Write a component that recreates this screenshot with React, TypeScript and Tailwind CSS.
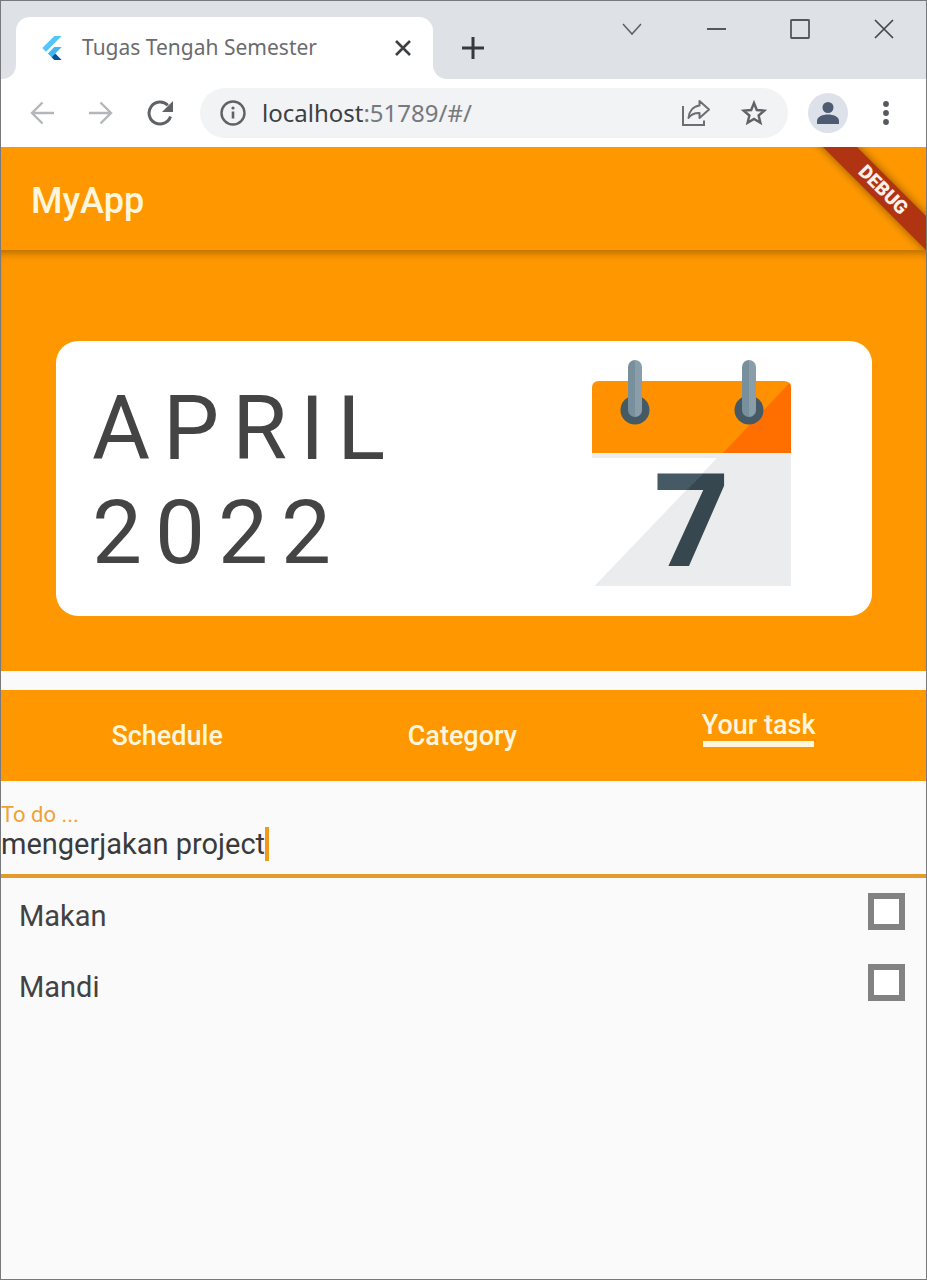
import { useState } from "react";
import type { ReactNode } from "react";

function IconButton({ label, className, children }: { label: string; className: string; children: ReactNode }) {
  return (
    <button type="button" aria-label={label} className={`flex shrink-0 items-center justify-center ${className}`}>
      {children}
    </button>
  );
}

function FlutterLogo() {
  return (
    <svg width="20" height="24" viewBox="2 0 20 24" aria-hidden="true">
      <path d="M14.3 0 2.3 12 6 15.7 21.7 0z" fill="#54c5f8" />
      <path d="M14.3 11.07 7.86 17.53l3.7 3.7L21.7 11.07z" fill="#3fb6f0" />
      <path d="m11.56 21.23 2.77 2.77h7.37l-6.46-6.47z" fill="#01579b" />
    </svg>
  );
}

function TabStrip() {
  return (
    <div className="flex h-[78px] items-end bg-[#dee1e6]">
      <div className="h-[62px] w-[15px] shrink-0 self-end bg-white">
        <div className="h-full rounded-br-[14px] bg-[#dee1e6]" />
      </div>
      <div className="flex h-[62px] w-[417px] shrink-0 items-center rounded-t-[14px] bg-white pl-[26px] pr-[18px]">
        <FlutterLogo />
        <span className="ml-5 flex-1 whitespace-nowrap pb-0.5 font-['Noto_Sans',sans-serif] text-[21px] leading-8 text-[#6b6b6e]">
          Tugas Tengah Semester
        </span>
        <IconButton label="Close tab" className="size-6">
          <svg width="16" height="16" viewBox="0 0 16 16" stroke="#3c4043" strokeWidth="2.6">
            <path d="m1 1 14 14M15 1 1 15" />
          </svg>
        </IconButton>
      </div>
      <div className="flex h-[62px] w-20 shrink-0 bg-white">
        <div className="flex h-full w-full items-center justify-center rounded-bl-[14px] bg-[#dee1e6]">
          <IconButton label="New tab" className="size-8">
            <svg width="22" height="22" viewBox="0 0 22 22" stroke="#36393d" strokeWidth="3">
              <path d="M11 0v22M0 11h22" />
            </svg>
          </IconButton>
        </div>
      </div>
      <div className="flex h-14 flex-1 items-center justify-end self-start">
        <IconButton label="Search tabs" className="h-14 w-21">
          <svg width="20" height="13" viewBox="0 0 20 13" fill="none" stroke="#5f6368" strokeWidth="1.6">
            <path d="m1 1 9 10 9-10" />
          </svg>
        </IconButton>
        <IconButton label="Minimize" className="h-14 w-21">
          <svg width="19" height="2" viewBox="0 0 19 2">
            <path d="M0 0h19v2H0z" fill="#54575b" />
          </svg>
        </IconButton>
        <IconButton label="Maximize" className="h-14 w-21">
          <svg width="20" height="20" viewBox="0 0 20 20" fill="none" stroke="#54575b" strokeWidth="1.8">
            <rect x="1" y="1" width="18" height="18" rx="0.5" />
          </svg>
        </IconButton>
        <IconButton label="Close window" className="h-14 w-21">
          <svg width="20" height="20" viewBox="0 0 20 20" stroke="#44474b" strokeWidth="1.7">
            <path d="m1 1 18 18M19 1 1 19" />
          </svg>
        </IconButton>
      </div>
    </div>
  );
}

function Toolbar() {
  return (
    <div className="flex h-[68px] items-center bg-white pl-[11px] pr-[22px]">
      <IconButton label="Back" className="h-12 w-[59px]">
        <svg width="24" height="24" viewBox="0 0 24 24" fill="none" stroke="#b4b6b9" strokeWidth="2.4">
          <path d="M24 12H2M12.500 1.500 2 12l10.500 10.500" />
        </svg>
      </IconButton>
      <IconButton label="Forward" className="h-12 w-[59px]">
        <svg width="24" height="24" viewBox="0 0 24 24" fill="none" stroke="#b4b6b9" strokeWidth="2.4">
          <path d="M0 12h22M11.500 1.500 22 12 11.500 22.500" />
        </svg>
      </IconButton>
      <IconButton label="Reload" className="h-12 w-[59px]">
        <svg width="26" height="26" viewBox="0 0 26 26" fill="none">
          <path d="M23.500 16.500A11 11 0 1 1 20.800 5.200" stroke="#5f6368" strokeWidth="3" />
          <path d="M26 1v11H15z" fill="#5f6368" />
        </svg>
      </IconButton>
      <div className="ml-[11px] flex h-[50px] flex-1 items-center rounded-full bg-[#f1f3f4] pl-5 pr-[18px]">
        <svg className="shrink-0" width="26" height="26" viewBox="0 0 26 26" fill="none" aria-hidden="true">
          <circle cx="13" cy="13" r="11.500" stroke="#5f6368" strokeWidth="2.400" />
          <path d="M13 11.500v7" stroke="#5f6368" strokeWidth="2.600" />
          <circle cx="13" cy="8" r="1.600" fill="#5f6368" />
        </svg>
        <span className="ml-4 flex-1 whitespace-nowrap font-['Noto_Sans',sans-serif] text-[24px] leading-9 text-[#77797d]">
          <span className="text-[#3c4043]">localhost</span>:51789/#/
        </span>
        <IconButton label="Share this page" className="mr-6 h-12 w-9">
          <svg width="30" height="28" viewBox="0 0 30 28" fill="none" stroke="#6b6e72" strokeWidth="2">
            <path d="M2 7v19h21v-4.500" />
            <path d="M18.500 2 28 10.500 18.500 19v-5c-5-.2-8.500 1.500-11 5 .5-6.500 4.500-11.500 11-12.500z" strokeLinejoin="round" />
          </svg>
        </IconButton>
        <IconButton label="Bookmark this tab" className="size-8">
          <svg width="28" height="28" viewBox="0 0 28 28" fill="none" stroke="#5f6368" strokeWidth="2.400">
            <path d="m14 4 2.800 7 7.500.6-5.700 4.900 1.800 7.300L14 19.900l-6.400 3.900 1.800-7.300-5.700-4.900 7.500-.6z" />
          </svg>
        </IconButton>
      </div>
      <IconButton label="Profile" className="ml-5 size-10 rounded-full bg-[#dde1ea]">
        <svg width="24" height="24" viewBox="0 0 24 24" fill="#4f5a73">
          <circle cx="12" cy="6.500" r="5.500" />
          <path d="M1 23v-3c0-4.500 6-6.500 11-6.500s11 2 11 6.500v3z" />
        </svg>
      </IconButton>
      <IconButton label="Menu" className="ml-5 h-12 w-9">
        <svg width="6" height="26" viewBox="0 0 6 26" fill="#56595d">
          <circle cx="3" cy="4" r="2.900" />
          <circle cx="3" cy="13" r="2.900" />
          <circle cx="3" cy="22" r="2.900" />
        </svg>
      </IconButton>
    </div>
  );
}

function AppBar() {
  return (
    <header className="relative flex h-[103px] items-center overflow-hidden bg-[#ff9800] px-[30px] pt-1">
      <h1 className="text-[36px] font-medium leading-10 text-[#fff6dd]">MyApp</h1>
      <div className="absolute right-[-47px] top-[31px] flex h-6 w-[180px] rotate-45 items-center justify-center bg-[#b03412] text-[19px] font-black leading-6 text-[#fff1ea] shadow-[0_0_10px_rgba(0,0,0,0.45)]">
        DEBUG
      </div>
    </header>
  );
}

function Calendar() {
  return (
    <svg
      className="shrink-0 overflow-visible"
      width="200"
      height="240"
      viewBox="0 0 200 240"
      role="img"
      aria-label="Day 7"
    >
      <defs>
        <linearGradient id="seven" gradientUnits="userSpaceOnUse" x1="80" y1="106" x2="120" y2="146">
          <stop offset="0.500" stopColor="#455a64" />
          <stop offset="0.500" stopColor="#37474f" />
        </linearGradient>
        <linearGradient id="ring" x1="0" x2="1" y1="0" y2="0">
          <stop offset="0.500" stopColor="#78909c" />
          <stop offset="0.500" stopColor="#8a9ea9" />
        </linearGradient>
      </defs>
      <path d="M0 93h199v134H2.500L125 99H0z" fill="#ebecee" />
      <path d="M0 94V29q0-7 7-7h185q7 0 7 7v65z" fill="#ff9100" />
      <path d="M131 94 197.500 24q1.500 2 1.500 5v65z" fill="#ff6f00" />
      {[43, 157].map((x) => (
        <g key={x}>
          <circle cx={x} cy="51" r="14.500" fill="#455a64" />
          <rect x={x - 7} y="1" width="14" height="57" rx="7" fill="url(#ring)" />
        </g>
      ))}
      <text x="62" y="207" fill="url(#seven)" className="font-['Open_Sans',sans-serif] text-[130px] font-bold">
        7
      </text>
    </svg>
  );
}

function TaskInput() {
  const [value, setValue] = useState("mengerjakan project");
  return (
    <label className="flex h-[97px] cursor-text flex-col border-b-4 border-[#e59a2e] pt-[22px]">
      <span className="text-[22px] leading-6 text-[#f0a236]">To do ...</span>
      <span className="flex h-[34px] items-center">
        <input
          value={value}
          onChange={(e) => setValue(e.target.value)}
          className="field-sizing-content bg-transparent text-[29px] leading-[34px] text-[#3a3a3a] caret-transparent outline-none"
        />
        <span className="h-[34px] w-1 bg-[#f09a1c]" />
      </span>
    </label>
  );
}

const tasks = ["Makan", "Mandi"];

export default function App() {
  return (
    <div className="flex min-h-screen flex-col border border-[#77797c] bg-[#fafafa] font-[Roboto,sans-serif]">
      <TabStrip />
      <Toolbar />
      <AppBar />
      <main className="flex flex-1 flex-col">
        <section className="bg-[#ff9800] pb-[55px] pl-[55px] pr-[54px] pt-[91px] shadow-[inset_0_8px_8px_-5px_rgba(0,0,0,0.3)]">
          <div className="flex h-[275px] items-center justify-between rounded-[22px] bg-white pl-9 pr-20">
            <p className="pt-1 text-[89px] leading-[104px] tracking-[13px] text-[#444444]">
              APRIL
              <br />
              2022
            </p>
            <Calendar />
          </div>
        </section>
        <nav className="mt-[19px] flex h-[91px] items-center justify-around bg-[#ff9800] px-[18px] text-[27px] font-medium leading-8 text-[#fff6dd]">
          <a href="#schedule">Schedule</a>
          <a href="#category">Category</a>
          <a href="#task" className="flex flex-col items-center pb-4" aria-current="page">
            Your task
            <span className="h-[6px] w-[111px] bg-[#fff6dd]" />
          </a>
        </nav>
        <TaskInput />
        <ul className="pt-[15px]">
          {tasks.map((task) => (
            <li key={task} className="h-[71px]">
              <label className="flex items-start justify-between pl-[18px] pr-[21px] text-[29px] leading-[46px] text-[#424242]">
                {task}
                <input
                  type="checkbox"
                  className="size-[37px] appearance-none border-[6px] border-[#828282] bg-white checked:bg-[#ff9800]"
                />
              </label>
            </li>
          ))}
        </ul>
      </main>
    </div>
  );
}
